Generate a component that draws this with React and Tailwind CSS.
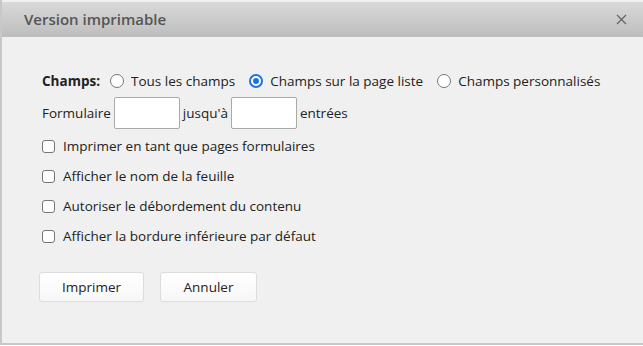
import React, { useState } from 'react'

const Radio = ({ checked, label, onClick }) => (
    <label className="flex items-center cursor-pointer" onClick={onClick}>
        <span className={`w-[14px] h-[14px] rounded-full border flex items-center justify-center bg-white ${checked ? 'border-[#1a73e8] border-2' : 'border-[#767676]'}`}>
            {checked && <span className="w-[6px] h-[6px] rounded-full bg-[#1a73e8]" />}
        </span>
        <span className="ml-[7px]">{label}</span>
    </label>
)

const Check = ({ label }) => (
    <label className="flex items-center h-[30px] cursor-pointer">
        <span className="w-[13px] h-[13px] rounded-[3px] border border-[#767676] bg-white" />
        <span className="ml-[8px]">{label}</span>
    </label>
)

export default function App() {
    const [field, setField] = useState(1)
    const options = ['Tous les champs', 'Champs sur la page liste', 'Champs personnalisés']

    return (
        <div className="w-[643px] h-[346px] bg-white font-['Open_Sans',sans-serif] text-[13.5px] text-[#222]">
            <div className="h-[345px] pt-[2px] border-l-2 border-b-2 border-[#c8c8c8] bg-[#f0f0f0] flex flex-col">
                <div className="h-[35px] flex items-center justify-between pl-[22px] pr-[16px] bg-gradient-to-b from-[#d9d9d9] to-[#bdbdbd]">
                    <span className="text-[15px] font-semibold text-[#555]">Version imprimable</span>
                    <svg width="11" height="11" viewBox="0 0 11 11" className="text-[#666]">
                        <path d="M1 1 L10 10 M10 1 L1 10" stroke="currentColor" strokeWidth="1.3" />
                    </svg>
                </div>
                <div className="pl-[40px] pt-[32px]">
                    <div className="flex items-center gap-[14px] h-[24px]">
                        <span className="font-bold mr-[-4px]">Champs:</span>
                        {options.map((o, i) => (
                            <Radio key={o} label={o} checked={field === i} onClick={() => setField(i)} />
                        ))}
                    </div>
                    <div className="flex items-center mt-[4px]">
                        <span>Formulaire</span>
                        <input className="mx-[3px] w-[66px] h-[32px] bg-white border border-[#a9a9a9] rounded-[2px]" />
                        <span>jusqu'à</span>
                        <input className="mx-[3px] w-[66px] h-[32px] bg-white border border-[#a9a9a9] rounded-[2px]" />
                        <span>entrées</span>
                    </div>
                    <div className="mt-[2px] flex flex-col">
                        <Check label="Imprimer en tant que pages formulaires" />
                        <Check label="Afficher le nom de la feuille" />
                        <Check label="Autoriser le débordement du contenu" />
                        <Check label="Afficher la bordure inférieure par défaut" />
                    </div>
                    <div className="flex gap-[16px] mt-[21px] -ml-[3px]">
                        <button className="w-[105px] h-[30px] bg-gradient-to-b from-white to-[#f7f7f7] border border-[#dcdcdc] rounded-[3px]">Imprimer</button>
                        <button className="w-[97px] h-[30px] bg-gradient-to-b from-white to-[#f7f7f7] border border-[#dcdcdc] rounded-[3px]">Annuler</button>
                    </div>
                </div>
            </div>
        </div>
    )
}
